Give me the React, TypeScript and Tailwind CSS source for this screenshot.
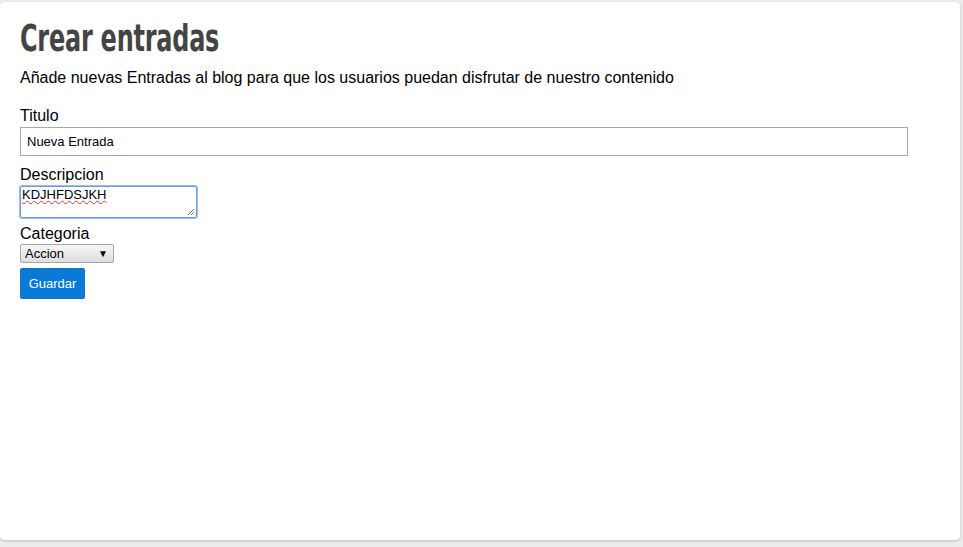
export default function App() {
  return (
    <div className="h-[547px] w-[963px] overflow-hidden bg-[#ececec] pt-[2px] font-['Liberation_Sans',Arial,sans-serif]">
      <div className="h-[538px] w-[960px] rounded-[4px] bg-white px-5 pt-[13px] shadow-[0_1px_3px_rgba(0,0,0,0.2)]">
        <h1 className="h-[46px] whitespace-nowrap">
          <span className="inline-block origin-left scale-x-[0.7] font-['DejaVu_Sans_Condensed','DejaVu_Sans',sans-serif] text-[38px] font-bold leading-[46px] tracking-[-0.3px] text-[#444]">
            Crear entradas
          </span>
        </h1>
        <p className="mt-[7px] text-base leading-[20px] text-black">
          Añade nuevas Entradas al blog para que los usuarios puedan disfrutar de nuestro contenido
        </p>
        <form className="mt-[18px] flex flex-col items-start">
          <label className="text-base leading-[20px] text-black">Titulo</label>
          <input
            defaultValue="Nueva Entrada"
            className="mt-[1px] h-[29px] w-[888px] border border-[#a9a9a9] px-[6px] text-[13px] text-black outline-none"
          />
          <label className="mt-[9px] text-base leading-[20px] text-black">Descripcion</label>
          <div className="relative mt-[1px] h-[32px] w-[177px] rounded-[2px] border border-[#6e9ee0] shadow-[0_0_0_1px_#9cbcf0]">
            <span className="absolute left-[1px] top-0 text-[13px] leading-[16px] text-black underline decoration-[#e33] decoration-wavy decoration-1 underline-offset-[1px]">
              KDJHFDSJKH
            </span>
            <svg className="absolute bottom-[1px] right-[1px]" width="8" height="8" viewBox="0 0 8 8">
              <path d="M7 1 L1 7 M7 4 L4 7" stroke="#777" strokeWidth="1" />
            </svg>
          </div>
          <label className="mt-[6px] text-base leading-[20px] text-black">Categoria</label>
          <div className="flex h-[19px] w-[94px] items-center justify-between rounded-[2px] border border-[#a6a6a6] bg-gradient-to-b from-[#f6f6f6] to-[#dedede] pl-[4px] pr-[5px] text-[13px] text-black">
            <span className="leading-[16px]">Accion</span>
            <span className="text-[10px] leading-none">▼</span>
          </div>
          <button
            type="button"
            className="mt-[5px] h-[31px] w-[65px] rounded-[2px] bg-[#0a7ad8] text-[13px] text-white"
          >
            Guardar
          </button>
        </form>
      </div>
    </div>
  );
}
